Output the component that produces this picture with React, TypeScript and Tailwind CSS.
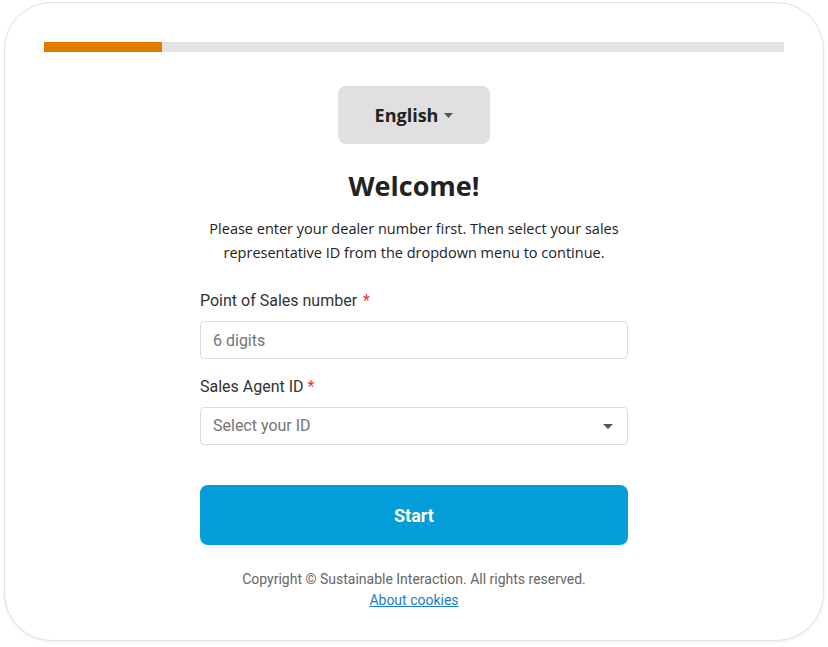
export default function App() {
  return (
    <div className="w-[828px] h-[647px] bg-white px-[4px] pt-[2px]">
      <div className="h-[639px] w-[820px] rounded-[48px] border border-[#e2e2e2] bg-white px-[39px] pt-[39px] shadow-[0_1px_3px_rgba(0,0,0,0.08)]">
        {/* progress */}
        <div className="flex h-[10px] w-[740px] bg-[#e3e3e3]">
          <div className="h-full w-[118px] bg-[#e07b00]" />
        </div>

        <div className="flex flex-col items-center">
          <button
            type="button"
            className="mt-[34px] flex h-[58px] w-[152px] items-center justify-center gap-[6px] rounded-[8px] bg-[#e0e0e0] text-[18px] font-bold text-[#222] font-['Open_Sans',sans-serif]"
          >
            English
            <svg width="9" height="5" viewBox="0 0 9 5">
              <path d="M0 0h9L4.5 5z" fill="#555" />
            </svg>
          </button>

          <h1 className="mt-[24px] text-[27px] leading-[36px] font-bold text-[#222] font-['Open_Sans',sans-serif]">
            Welcome!
          </h1>
          <p className="mt-[13px] text-center text-[14.5px] leading-[24px] font-medium text-[#222] font-['Open_Sans',sans-serif]">
            Please enter your dealer number first. Then select your sales
            <br />
            representative ID from the dropdown menu to continue.
          </p>

          <form className="mt-[24px] w-[428px] font-['Roboto',sans-serif]">
            <label className="block text-[16px] leading-[24px] text-[#333]">
              Point of Sales number <span className="ml-[2px] text-[#e53935]">*</span>
            </label>
            <input
              type="text"
              placeholder="6 digits"
              className="mt-[8px] h-[38px] w-full rounded-[4px] border border-[#dcdcdc] px-[12px] text-[16px] text-[#333] placeholder:text-[#757575] outline-none"
            />

            <label className="mt-[16px] block text-[16px] leading-[24px] text-[#333]">
              Sales Agent ID <span className="text-[#e53935]">*</span>
            </label>
            <div className="mt-[8px] flex h-[38px] w-full items-center justify-between rounded-[4px] border border-[#dcdcdc] px-[12px]">
              <span className="text-[16px] text-[#757575]">Select your ID</span>
              <svg width="10" height="5" viewBox="0 0 10 5" className="mr-[2px]">
                <path d="M0 0h10L5 5z" fill="#555" />
              </svg>
            </div>

            <button
              type="button"
              className="mt-[40px] flex h-[60px] w-full items-center justify-center rounded-[8px] bg-[#039dda] text-[18px] font-bold text-white"
            >
              Start
            </button>

            <div className="mt-[24px] flex flex-col items-center text-[14px] leading-[21px]">
              <span className="text-[#666]">
                Copyright © Sustainable Interaction. All rights reserved.
              </span>
              <a href="#" className="text-[#1a7bcb] underline">
                About cookies
              </a>
            </div>
          </form>
        </div>
      </div>
    </div>
  );
}
